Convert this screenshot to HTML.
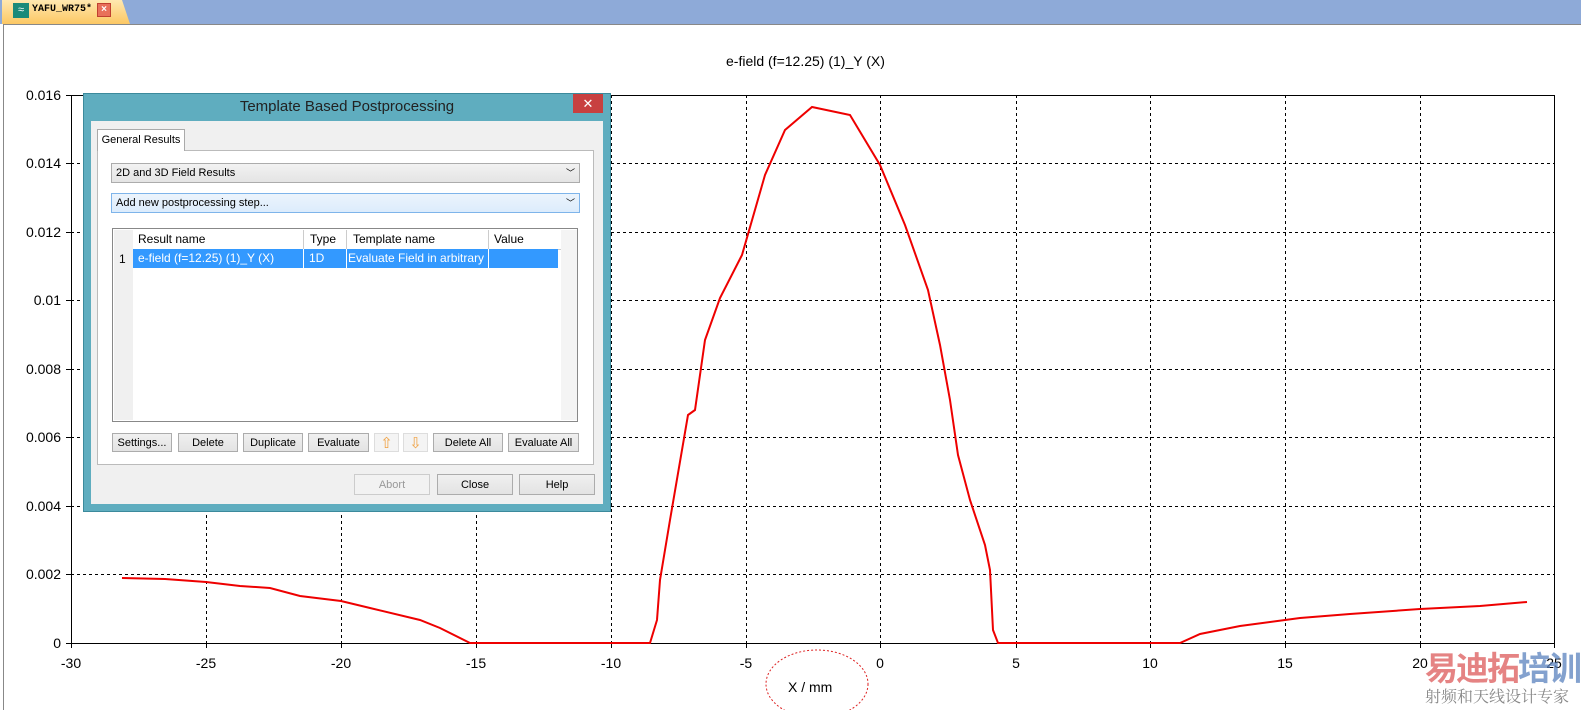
<!DOCTYPE html>
<html><head><meta charset="utf-8"><style>
body{margin:0;width:1581px;height:710px;overflow:hidden;background:#fff;font-family:"Liberation Sans",sans-serif;position:relative}
.a{position:absolute}
.btn{position:absolute;height:19px;border:1px solid #acacac;background:linear-gradient(#f0f0f0,#e3e3e3);font-size:11px;text-align:center;line-height:19px;color:#000;box-sizing:border-box}
.yl{position:absolute;font-size:14px;right:1520px;text-align:right}
.xl{position:absolute;font-size:14px;top:655px;width:40px;margin-left:-20px;text-align:center}
</style></head><body>
<div class="a" style="left:0;top:0;width:1581px;height:24px;background:#8eaad8"></div>
<div class="a" style="left:2px;top:0;width:128px;height:24px;background:linear-gradient(#ffe8b0,#fcc864);clip-path:polygon(0 0,120px 0,128px 24px,0 24px)"></div>
<div class="a" style="left:13px;top:3px;width:16px;height:15px;background:#1a8a7a;color:#fff;font-size:11px;line-height:15px;text-align:center">≈</div>
<div class="a" style="left:32px;top:4px;font-family:'Liberation Mono',monospace;font-size:10px;font-weight:bold">YAFU_WR75*</div>
<div class="a" style="left:97px;top:3px;width:12px;height:12px;background:#e8705a;border:1px solid #c04030;color:#fff;font-size:10px;line-height:12px;text-align:center;font-weight:bold">×</div>
<div class="a" style="left:3px;top:24px;width:1578px;height:686px;border-left:1px solid #888;border-top:1px solid #888;background:#fff;box-sizing:border-box"></div>
<div class="a" style="left:726px;top:53px;font-size:14px">e-field (f=12.25) (1)_Y (X)</div>
<svg class="a" style="left:0;top:0" width="1581" height="710">
<g stroke="#000" stroke-dasharray="3,3" stroke-width="1">
<path d="M206.5 95V643M341.5 95V643M476.5 95V643M611.5 95V643M746.5 95V643M880.5 95V643M1016.5 95V643M1150.5 95V643M1285.5 95V643M1420.5 95V643"/>
<path d="M71 574.5H1554M71 506.5H1554M71 437.5H1554M71 369.5H1554M71 300.5H1554M71 232.5H1554M71 163.5H1554"/>
</g>
<rect x="71.5" y="95.5" width="1483" height="548" fill="none" stroke="#000"/>
<g stroke="#000"><path d="M66 95.5H71M66 163.5H71M66 232.5H71M66 300.5H71M66 369.5H71M66 437.5H71M66 506.5H71M66 574.5H71M66 643.5H71M71.5 643V648M206.5 643V648M341.5 643V648M476.5 643V648M611.5 643V648M746.5 643V648M880.5 643V648M1016.5 643V648M1150.5 643V648M1285.5 643V648M1420.5 643V648M1554.5 643V648"/></g>
<polyline fill="none" stroke="#e00" stroke-width="2" points="122,578 165,579 206,582 240,586 270,588 300,596 341,601 370,608 420,620 440,628 470,643 650,643 657,620 660,580 670,520 688,415 695,410 705,340 720,298 742,255 765,175 785,130 812,107 850,115 880,165 905,225 928,290 940,345 950,400 958,455 970,500 985,545 990,570 993,630 998,643 1180,643 1200,634 1240,626 1285,620 1300,618 1350,614 1420,609 1480,606 1527,602"/>
<ellipse cx="817" cy="684" rx="51" ry="34" fill="none" stroke="#d22" stroke-dasharray="2,2"/>
</svg>
<div class="yl" style="top:87px">0.016</div><div class="yl" style="top:155px">0.014</div><div class="yl" style="top:224px">0.012</div><div class="yl" style="top:292px">0.01</div><div class="yl" style="top:361px">0.008</div><div class="yl" style="top:429px">0.006</div><div class="yl" style="top:498px">0.004</div><div class="yl" style="top:566px">0.002</div><div class="yl" style="top:635px">0</div>
<div class="xl" style="left:71px">-30</div><div class="xl" style="left:206px">-25</div><div class="xl" style="left:341px">-20</div><div class="xl" style="left:476px">-15</div><div class="xl" style="left:611px">-10</div><div class="xl" style="left:746px">-5</div><div class="xl" style="left:880px">0</div><div class="xl" style="left:1016px">5</div><div class="xl" style="left:1150px">10</div><div class="xl" style="left:1285px">15</div><div class="xl" style="left:1420px">20</div><div class="xl" style="left:1554px">25</div>
<div class="a" style="left:788px;top:679px;font-size:14px">X / mm</div>
<div class="a" style="left:1425px;top:648px;font-size:33px;font-weight:bold;color:rgba(220,90,90,.75);font-family:'Noto Sans CJK SC',sans-serif;letter-spacing:-2px;line-height:36px">易迪拓<span style="color:rgba(90,130,190,.75)">培训</span></div>
<div class="a" style="left:1425px;top:686px;font-size:16px;color:#888;font-family:'Noto Serif CJK SC',serif;line-height:20px">射频和天线设计专家</div>
<div class="a" style="left:83px;top:93px;width:528px;height:419px;background:#5fadbf;border:1px solid #3c8a9c;box-sizing:border-box"></div>
<div class="a" style="left:83px;top:98px;width:528px;text-align:center;font-size:15px;color:#222">Template Based Postprocessing</div>
<div class="a" style="left:573px;top:94px;width:30px;height:19px;background:#c84040;color:#fff;font-size:13px;text-align:center;line-height:19px">✕</div>
<div class="a" style="left:91px;top:121px;width:512px;height:383px;background:#f0f0f0"></div>
<div class="a" style="left:97px;top:129px;width:88px;height:22px;background:#fff;border:1px solid #aaa;border-bottom:none;font-size:11px;line-height:21px;text-align:center;box-sizing:border-box;z-index:2">General Results</div>
<div class="a" style="left:97px;top:150px;width:497px;height:315px;background:#fff;border:1px solid #bbb;box-sizing:border-box"></div>
<div class="a" style="left:111px;top:163px;width:469px;height:20px;border:1px solid #acacac;background:linear-gradient(#f2f2f2,#e4e4e4);box-sizing:border-box;font-size:11px;line-height:18px;padding-left:4px">2D and 3D Field Results<span style="position:absolute;right:4px;font-size:9px">﹀</span></div>
<div class="a" style="left:111px;top:193px;width:469px;height:20px;border:1px solid #7eb4ea;background:linear-gradient(#ecf4fc,#dcecfc);box-sizing:border-box;font-size:11px;line-height:18px;padding-left:4px">Add new postprocessing step...<span style="position:absolute;right:4px;font-size:9px">﹀</span></div>
<div class="a" style="left:112px;top:228px;width:466px;height:194px;border:1px solid #888;background:#fff;box-sizing:border-box"></div>
<div class="a" style="left:114px;top:230px;width:19px;height:190px;background:#f0f0f0"></div>
<div class="a" style="left:561px;top:230px;width:16px;height:190px;background:#f4f4f4"></div>
<div class="a" style="left:133px;top:230px;width:428px;height:19px;background:#fff;border-bottom:1px solid #ccc;font-size:12px;line-height:19px">
<span class="a" style="left:5px">Result name</span><span class="a" style="left:170px;border-left:1px solid #ccc;padding-left:6px;height:19px">Type</span><span class="a" style="left:213px;border-left:1px solid #ccc;padding-left:6px;height:19px">Template name</span><span class="a" style="left:355px;border-left:1px solid #ccc;padding-left:5px;height:19px">Value</span></div>
<div class="a" style="left:119px;top:252px;font-size:12px">1</div>
<div class="a" style="left:133px;top:249px;width:425px;height:19px;background:#3399ff;color:#fff;font-size:12px;line-height:19px;overflow:hidden">
<span class="a" style="left:5px">e-field (f=12.25) (1)_Y (X)</span><span class="a" style="left:170px;border-left:1px solid #fff;padding-left:5px;height:19px">1D</span><span class="a" style="left:213px;border-left:1px solid #fff;padding-left:1px;height:19px;width:140px;overflow:hidden;white-space:nowrap">Evaluate Field in arbitrary C</span><span class="a" style="left:355px;border-left:1px solid #fff;height:19px"></span></div>
<div class="btn" style="left:112px;top:433px;width:60px">Settings...</div>
<div class="btn" style="left:178px;top:433px;width:60px">Delete</div>
<div class="btn" style="left:243px;top:433px;width:60px">Duplicate</div>
<div class="btn" style="left:308px;top:433px;width:61px">Evaluate</div>
<div class="btn" style="left:374px;top:433px;width:25px;color:#f0a040;font-size:15px;background:#f4f4f4;border-color:#ddd">⇧</div>
<div class="btn" style="left:403px;top:433px;width:25px;color:#f0a040;font-size:15px;background:#f4f4f4;border-color:#ddd">⇩</div>
<div class="btn" style="left:433px;top:433px;width:70px">Delete All</div>
<div class="btn" style="left:508px;top:433px;width:71px">Evaluate All</div>
<div class="btn" style="left:354px;top:474px;width:76px;height:21px;line-height:21px;color:#999;border-color:#ccc;background:#f2f2f2">Abort</div>
<div class="btn" style="left:437px;top:474px;width:76px;height:21px;line-height:21px">Close</div>
<div class="btn" style="left:519px;top:474px;width:76px;height:21px;line-height:21px">Help</div>
</body></html>
